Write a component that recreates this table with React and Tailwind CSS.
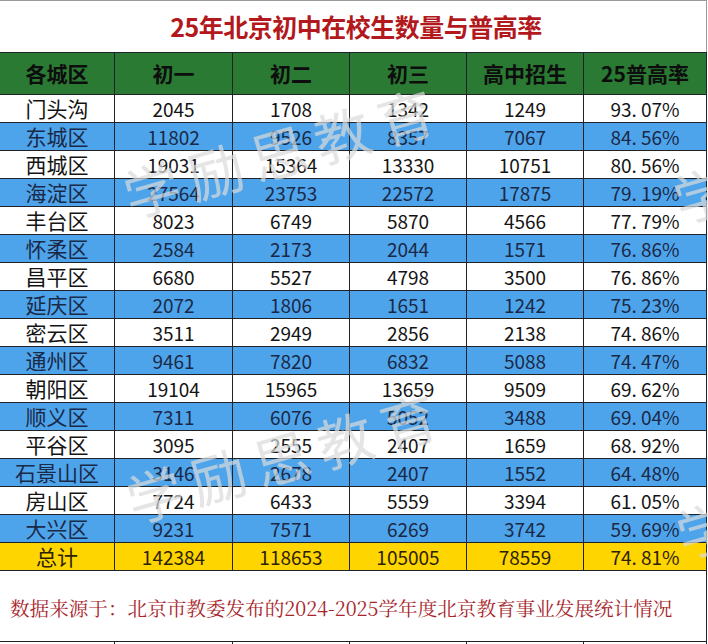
const rows = [
  ['门头沟', '2045', '1708', '1342', '1249', '93. 07%'],
  ['东城区', '11802', '9526', '8357', '7067', '84. 56%'],
  ['西城区', '19031', '15364', '13330', '10751', '80. 56%'],
  ['海淀区', '27564', '23753', '22572', '17875', '79. 19%'],
  ['丰台区', '8023', '6749', '5870', '4566', '77. 79%'],
  ['怀柔区', '2584', '2173', '2044', '1571', '76. 86%'],
  ['昌平区', '6680', '5527', '4798', '3500', '76. 86%'],
  ['延庆区', '2072', '1806', '1651', '1242', '75. 23%'],
  ['密云区', '3511', '2949', '2856', '2138', '74. 86%'],
  ['通州区', '9461', '7820', '6832', '5088', '74. 47%'],
  ['朝阳区', '19104', '15965', '13659', '9509', '69. 62%'],
  ['顺义区', '7311', '6076', '5052', '3488', '69. 04%'],
  ['平谷区', '3095', '2555', '2407', '1659', '68. 92%'],
  ['石景山区', '3146', '2678', '2407', '1552', '64. 48%'],
  ['房山区', '7724', '6433', '5559', '3394', '61. 05%'],
  ['大兴区', '9231', '7571', '6269', '3742', '59. 69%'],
]

const total = ['总计', '142384', '118653', '105005', '78559', '74. 81%']
const headers = ['各城区', '初一', '初二', '初三', '高中招生', '25普高率']
const widths = ['w-[115px]', 'w-[118px]', 'w-[117px]', 'w-[117px]', 'w-[117px]', 'w-[123px]']

const sans = "font-['Noto_Sans_CJK_SC','Noto_Sans',sans-serif]"

const Row = ({ cells, className, textClass, height = 'h-[28px]' }) => (
  <div className={`flex ${height} ${className}`}>
    {cells.map((c, i) => (
      <div
        key={i}
        className={`${widths[i]} flex items-center justify-center border-b border-r border-[#1f2226] leading-none ${i === 0 ? 'text-[21px]' : 'text-[19px]'} ${textClass}`}
      >
        {c}
      </div>
    ))}
  </div>
)

// watermark lies over the table, so it is the one thing placed absolutely
const Watermark = ({ className }) => (
  <div
    className={`pointer-events-none absolute -translate-x-1/2 -translate-y-1/2 -rotate-[16deg] whitespace-nowrap text-[56px] font-normal leading-none tracking-[10px] text-[rgba(218,218,218,0.7)] ${sans} ${className}`}
  >
    学励思教育
  </div>
)

export default function App() {
  return (
    <div className={`relative h-[644px] w-[708px] overflow-hidden bg-white ${sans}`}>
      <div className="flex h-[52px] w-[707px] items-center justify-center border-r border-t border-[#9a9a9a] pl-[6px]">
        <h1 className="text-[25px] font-bold tracking-[-0.5px] text-[#b3191c]">25年北京初中在校生数量与普高率</h1>
      </div>

      <div className="w-[707px]">
        <Row
          cells={headers}
          height="h-[43px]"
          className="bg-[#2a7a33] border-t border-[#1f2226]"
          textClass="!text-[21px] font-bold text-[#0d0d0d]"
        />
        {rows.map((r, i) => (
          <Row
            key={r[0]}
            cells={r}
            className={i % 2 ? 'bg-[#4ea4ea]' : 'bg-white'}
            textClass={i % 2 ? 'text-[#1a2947]' : 'text-[#141414]'}
          />
        ))}
        <Row cells={total} className="bg-[#ffd500]" textClass="text-[#2b2205]" />

        <div className="flex h-[71px] items-center border-b border-r border-[#1f2226] pl-[10px] pt-[4px]">
          <p className="font-['Noto_Serif_CJK_SC','Liberation_Serif','Noto_Sans_CJK_SC',serif] text-[19.6px] leading-none text-[#a8262b]">
            数据来源于：北京市教委发布的2024-2025学年度北京教育事业发展统计情况
          </p>
        </div>
        <Row cells={['', '', '', '', '', '']} className="bg-white" textClass="" />
      </div>

      <Watermark className="left-[283px] top-[150px]" />
      <Watermark className="left-[286px] top-[455px]" />
      <Watermark className="left-[833px] top-[155px]" />
      <Watermark className="left-[836px] top-[490px]" />
    </div>
  )
}
